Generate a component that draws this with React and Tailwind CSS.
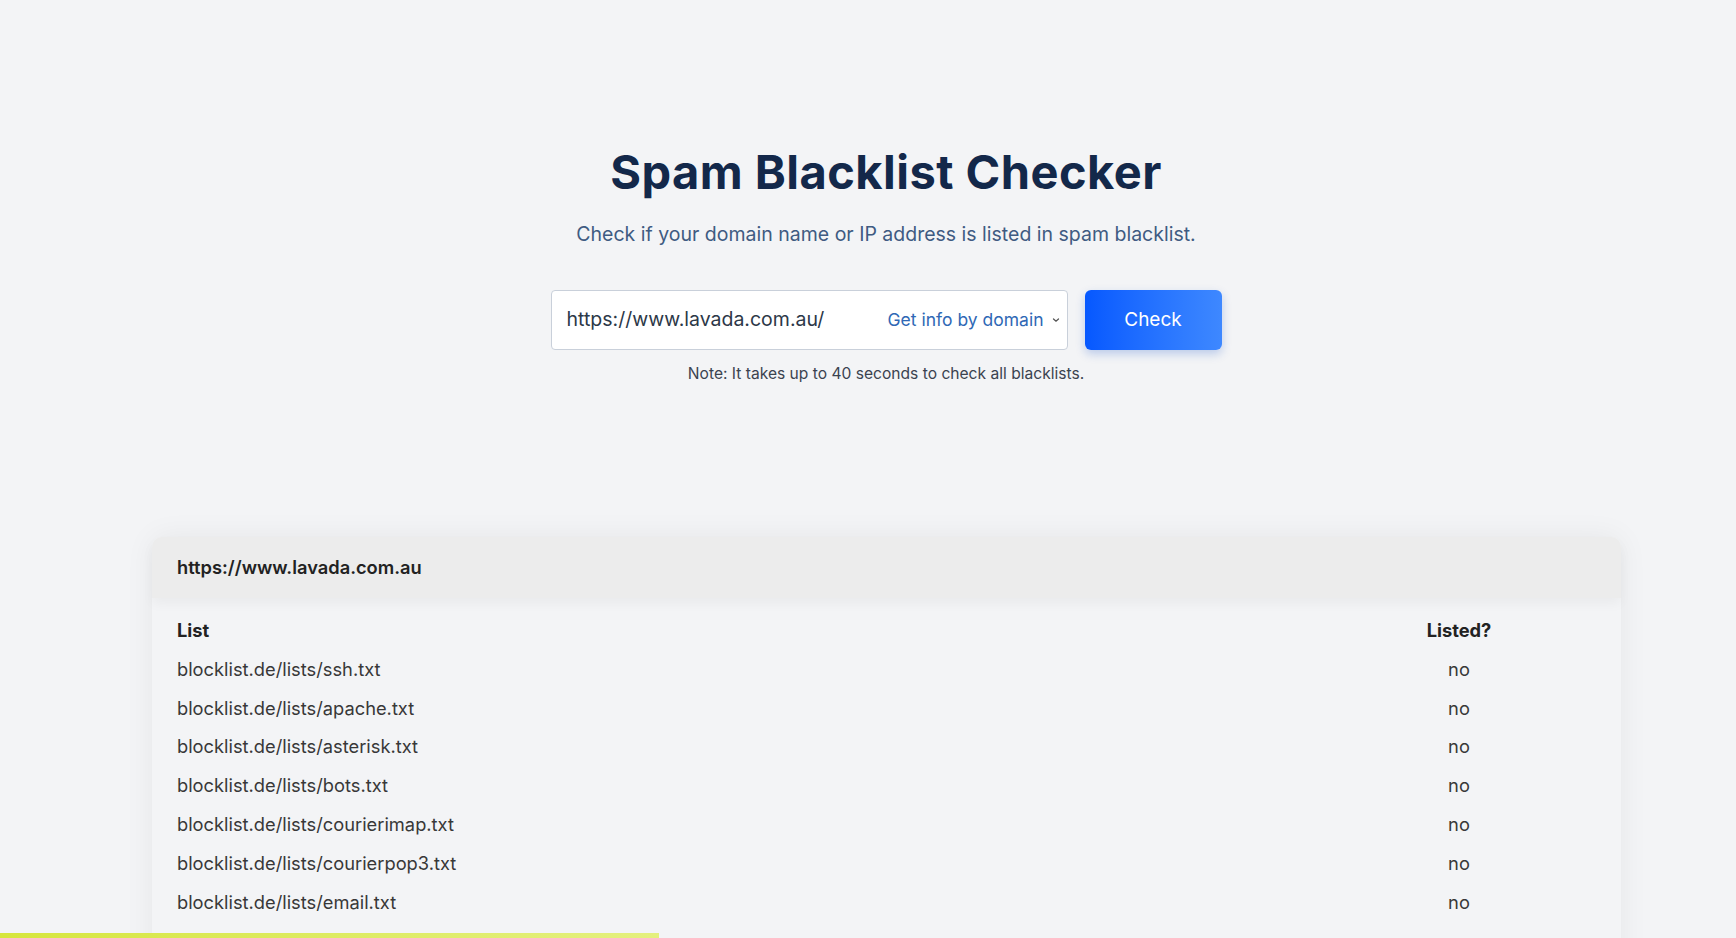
import React from "react";

const rows = [
  "blocklist.de/lists/ssh.txt",
  "blocklist.de/lists/apache.txt",
  "blocklist.de/lists/asterisk.txt",
  "blocklist.de/lists/bots.txt",
  "blocklist.de/lists/courierimap.txt",
  "blocklist.de/lists/courierpop3.txt",
  "blocklist.de/lists/email.txt",
];

const App = () => {
  return (
    <div className="relative h-[938px] overflow-hidden bg-[#f3f4f6] font-['Inter',sans-serif]">
      {/* Hero */}
      <div className="flex flex-col items-center pl-[36px] pt-[148px]">
        <h1 className="text-[47px] font-bold leading-none tracking-[0.01em] text-[#13284a]">
          Spam Blacklist Checker
        </h1>
        <p className="mt-[25px] text-[19.5px] leading-[29px] text-[#3f5b82]">
          Check if your domain name or IP address is listed in spam blacklist.
        </p>

        <div className="mt-[41px] flex gap-[17px]">
          <div className="flex h-[60px] w-[517px] items-center justify-between rounded-[4px] border border-[#c9d0da] bg-white pl-[15px] pr-[6px]">
            <span className="text-[19.5px] text-[#2c3848]">
              https://www.lavada.com.au/
            </span>
            <span className="flex items-center gap-[7px] text-[17.5px] text-[#2f68b5]">
              Get info by domain
              <svg width="10" height="10" viewBox="0 0 10 10" fill="none">
                <path d="M2.5 4 L5 6.2 L7.5 4" stroke="#555" strokeWidth="1.3" strokeLinecap="round" />
              </svg>
            </span>
          </div>
          <button className="h-[60px] w-[137px] rounded-[6px] bg-gradient-to-r from-[#0658ff] to-[#3e88ff] text-[19px] text-white shadow-[0_4px_10px_rgba(20,80,200,0.25)]">
            Check
          </button>
        </div>

        <p className="mt-[12px] text-[15.6px] leading-[23px] text-[#3b4350]">
          Note: It takes up to 40 seconds to check all blacklists.
        </p>
      </div>

      {/* Results card */}
      <div className="ml-[152px] mr-[115px] mt-[152px] rounded-t-[10px] bg-[#f3f4f6] pb-[80px] shadow-[0_0_30px_rgba(0,0,0,0.06)]">
        <div className="flex h-[61px] items-center rounded-t-[10px] bg-[#ececec] px-[25px] shadow-[0_6px_12px_rgba(0,0,0,0.04)]">
          <span className="text-[18.3px] font-semibold text-[#222]">
            https://www.lavada.com.au
          </span>
        </div>
        <div className="pl-[25px] pr-[117px] pt-[19px]">
          <div className="grid grid-cols-[1fr_90px] items-center text-[18.3px] font-bold leading-[27px] text-[#222]">
            <span>List</span>
            <span className="text-center">Listed?</span>
          </div>
          <div className="mt-[6px] flex flex-col">
            {rows.map((r) => (
              <div key={r} className="grid h-[38.85px] grid-cols-[1fr_90px] items-center text-[18.3px] text-[#383838]">
                <span>{r}</span>
                <span className="text-center">no</span>
              </div>
            ))}
          </div>
        </div>
      </div>

      {/* Progress bar */}
      <div className="absolute bottom-0 left-0 h-[5px] w-[659px] bg-gradient-to-r from-[#d6e63c] to-[#e4f07e]" />
    </div>
  );
};

export default App;
